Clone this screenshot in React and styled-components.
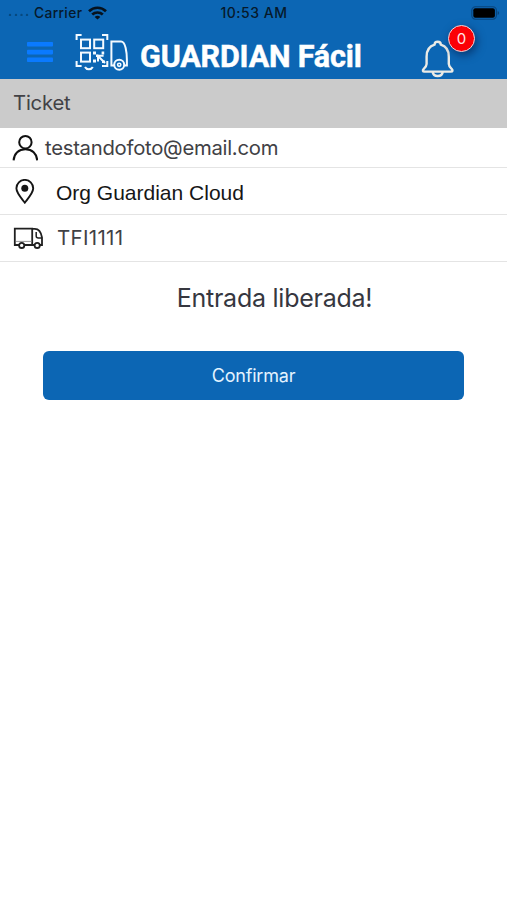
import React from "react";
import styled, { createGlobalStyle } from "styled-components";

const BLUE = "#0c66b4";

const GlobalStyle = createGlobalStyle`
  * { box-sizing: border-box; }
  body { margin: 0; background: #fff; font-family: Inter, "Liberation Sans", sans-serif; }
  svg { display: block; flex: none; }
`;

const Screen = styled.main`
  min-height: 900px;
  width: 100%;
  background: #fff;
  overflow: hidden;
`;

const Header = styled.header`
  height: 79px;
  background: ${BLUE};
`;

const StatusBar = styled.div`
  height: 26px;
  padding: 0 7px 0 8px;
  display: grid;
  grid-template-columns: 1fr auto 1fr;
  align-items: center;
  color: #06192b;
`;

const StatusGroup = styled.div`
  display: flex;
  align-items: center;
  justify-content: ${(p) => p.$align || "flex-start"};
`;

const NavBar = styled.div`
  height: 53px;
  display: flex;
  align-items: flex-start;
  padding: 1px 0 0 27px;
`;

const IconButton = styled.button`
  border: 0;
  padding: 0;
  background: none;
  flex: none;
  margin: ${(p) => p.$margin || 0};
`;

const Logo = styled.div`
  display: flex;
  flex: none;
  margin: 6px 0 0 22px;
  gap: 11px;
  -webkit-text-stroke: 0.5px #fff;
`;

const Alerts = styled.div`
  position: relative;
  margin: 13px 0 0 auto;
  padding-right: 52.5px;
`;

const Badge = styled.span`
  position: absolute;
  left: 27.5px;
  top: -15px;
  width: 27px;
  height: 27px;
  border: 1.5px solid #f3d9dc;
  border-radius: 50%;
  background: #fb0006;
  box-shadow: 2px 3px 9px rgba(0, 20, 60, 0.55);
  display: flex;
  align-items: center;
  justify-content: center;
`;

const Label = styled.span`
  font-family: ${(p) => p.$font || "Inter"}, "Liberation Sans", sans-serif;
  font-size: ${(p) => p.$size}px;
  line-height: ${(p) => p.$line || 24}px;
  font-weight: ${(p) => p.$weight || 400};
  letter-spacing: ${(p) => p.$spacing || 0}px;
  color: ${(p) => p.$color || "inherit"};
  padding-top: ${(p) => p.$top || 0}px;
  white-space: nowrap;
`;

const SectionTitle = styled.div`
  height: 49px;
  padding: 0 13px 2px;
  background: #cbcbcb;
  display: flex;
  align-items: center;
`;

const Row = styled.div`
  height: ${(p) => p.$height}px;
  border-bottom: 1px solid #e4e4e4;
  padding-left: 12px;
  display: flex;
  align-items: center;
`;

const IconSlot = styled.div`
  width: ${(p) => p.$width}px;
  flex: none;
`;

const Message = styled.div`
  display: flex;
  justify-content: center;
  padding: 19px 0 0 42px;
`;

const Confirm = styled.button`
  display: flex;
  align-items: center;
  justify-content: center;
  width: 421px;
  height: 49px;
  margin: 36px 0 0 43px;
  padding: 0;
  border: 0;
  border-radius: 6px;
  background: ${BLUE};
`;

const SignalDots = () => (
  <svg width="22" height="6" viewBox="0 0 22 6" fill="#07497f">
    <circle cx="2" cy="5" r="1.2" />
    <circle cx="8" cy="5" r="1.2" />
    <circle cx="13.5" cy="5" r="1.2" />
    <circle cx="19" cy="5" r="1.2" />
  </svg>
);

const Wifi = () => (
  <svg width="19" height="14" viewBox="0 0 19 14" fill="none" stroke="#06121e" strokeWidth="2.7">
    <path d="M1 5.2C5.8.6 13.2.6 18 5.2" />
    <path d="M4.2 8.6c3-2.8 7.6-2.8 10.6 0" />
    <path d="M9.5 13.6 6.7 10.9c1.6-1.4 4-1.4 5.6 0z" fill="#06121e" stroke="none" />
  </svg>
);

const Battery = () => (
  <svg width="29" height="14" viewBox="0 0 29 14">
    <rect x=".8" y=".8" width="24.6" height="12.4" rx="3.6" fill="none" stroke="#09457c" strokeWidth="1.1" />
    <rect x="2.3" y="2.3" width="21.6" height="9.4" rx="2" fill="#000" />
    <path d="M26.6 5c2 .8 2 3.2 0 4z" fill="#09457c" />
  </svg>
);

const Menu = () => (
  <svg width="26" height="21" viewBox="0 0 26 21" fill="#0a7aff">
    <rect width="26" height="4.6" rx=".8" />
    <rect y="7.8" width="26" height="4.6" rx=".8" />
    <rect y="15.5" width="26" height="4.6" rx=".8" />
  </svg>
);

const QrTruck = () => (
  <svg width="54" height="39" viewBox="0 0 54 39" fill="none" stroke="#f4faff" strokeWidth="2">
    <path d="M1.6 7V2h5M27 2h5.3v5M1.6 28v5h5M27 33h5.3v-5" />
    <rect x="6" y="6.6" width="9" height="8.6" />
    <rect x="19.2" y="6.6" width="9" height="8.6" />
    <rect x="6" y="19.6" width="9" height="9" />
    <path d="M10 34c1.6 3 6.2 3 7.8 0" />
    <path d="M18 18.6h3v3h-3zM21 21.6h2.4v2.4H21zM26.6 18.6h2.6v3h-2.6zM18 26.4h3v3h-3zM27 27.6h3v2.4h-3z" fill="#f4faff" stroke="none" />
    <path d="m30 30-7.5-7.5M23 28.6v-5.8h5.6" strokeWidth="2" />
    <path d="M39.2 32.4H36.4V8.6h9.6c2.4 0 3.6 2.2 4.6 6.2.9 3.6 1.3 8 1.3 12.2v5.4h-2.6" />
    <circle cx="44.2" cy="31.8" r="5" />
    <circle cx="44.2" cy="31.8" r="1.6" strokeWidth="1.6" />
  </svg>
);

const Bell = () => (
  <svg width="34" height="38" viewBox="0 0 34 38" fill="none" stroke="#ebebe6" strokeWidth="2.4" strokeLinejoin="round">
    <path d="M13.6 4.7c0-4 6.2-4 6.2 0 6 1.7 8 6.5 8 12v7.2c0 2 1 3 3 5.2 1.2 1.4.8 2.5-.8 2.5H3.4c-1.6 0-2-1.1-.8-2.5 2-2.2 3-3.2 3-5.2v-7.2c0-5.5 2-10.3 8-12Z" />
    <path d="M11.7 32c.6 5.4 9.4 5.4 10 0" />
  </svg>
);

const Person = () => (
  <svg width="26" height="26" viewBox="0 0 26 26" fill="none" stroke="#111" strokeWidth="2">
    <circle cx="13.4" cy="7.2" r="6.2" />
    <path d="M1.6 25.4c.4-7 5.1-11.2 11.8-11.2s11.4 4.2 11.8 11.2" />
  </svg>
);

const Pin = () => (
  <svg width="26" height="25" viewBox="0 0 26 25">
    <path d="M12.8 23.6C10 19.9 4.4 14.2 4.4 9.3a8.4 8.4 0 0 1 16.8 0c0 4.9-5.6 10.6-8.4 14.3Z" fill="none" stroke="#151515" strokeWidth="1.9" />
    <circle cx="12.8" cy="9.2" r="3.5" fill="#151515" />
  </svg>
);

const Truck = () => (
  <svg width="31" height="22" viewBox="0 0 31 22" fill="none" stroke="#202020" strokeWidth="1.8">
    <path d="M7 18H2.8V1.6h17.4V18h-8.4" />
    <path d="M20.2 1.8h2.6c4 0 6.4 4 7.2 8.6V18h-2.4M20.2 18h2.6" />
    <path d="M4 14.4h15.4" stroke="#999" strokeWidth="1" />
    <path d="M30 11h-3.6c-1.6 0-2.2-.6-2.2-2V5" strokeWidth="1.5" />
    <circle cx="9.7" cy="18.4" r="2.6" fill="#fff" />
    <circle cx="25.2" cy="18.4" r="2.6" fill="#fff" />
  </svg>
);

export default function App() {
  return (
    <Screen>
      <GlobalStyle />
      <Header>
        <StatusBar>
          <StatusGroup>
            <SignalDots />
            <IconSlot $width={4} />
            <Label $size={13.8} $weight={500} $spacing={0.35}>Carrier</Label>
            <IconSlot $width={6} />
            <Wifi />
          </StatusGroup>
          <Label $size={14} $weight={500} $spacing={0.5}>10:53 AM</Label>
          <StatusGroup $align="flex-end">
            <Battery />
          </StatusGroup>
        </StatusBar>
        <NavBar>
          <IconButton $margin="15px 0 0" aria-label="Menu">
            <Menu />
          </IconButton>
          <Logo>
            <QrTruck />
            <Label $font="Roboto" $size={30.5} $weight={700} $line={46} $top={1} $spacing={-0.16} $color="#fff">
              GUARDIAN Fácil
            </Label>
          </Logo>
          <Alerts>
            <IconButton aria-label="Notificações">
              <Bell />
            </IconButton>
            <Badge>
              <Label $size={15} $color="#ffe6e6">0</Label>
            </Badge>
          </Alerts>
        </NavBar>
      </Header>
      <SectionTitle>
        <Label $size={20.3} $spacing={-0.2} $color="#424246">Ticket</Label>
      </SectionTitle>
      <Row $height={40}>
        <IconSlot $width={33}><Person /></IconSlot>
        <Label $size={20.3} $spacing={-0.27} $color="#414145">testandofoto@email.com</Label>
      </Row>
      <Row $height={47}>
        <IconSlot $width={44}><Pin /></IconSlot>
        <Label $font="Liberation Sans" $size={21} $top={3} $color="#161616">Org Guardian Cloud</Label>
      </Row>
      <Row $height={47}>
        <IconSlot $width={45}><Truck /></IconSlot>
        <Label $size={20.5} $spacing={0.3} $color="#414145">TFI1111</Label>
      </Row>
      <Message>
        <Label $size={25} $line={34} $spacing={-0.25} $color="#36373f">Entrada liberada!</Label>
      </Message>
      <Confirm>
        <Label $size={18} $spacing={-0.2} $color="#e3f3ff">Confirmar</Label>
      </Confirm>
    </Screen>
  );
}
